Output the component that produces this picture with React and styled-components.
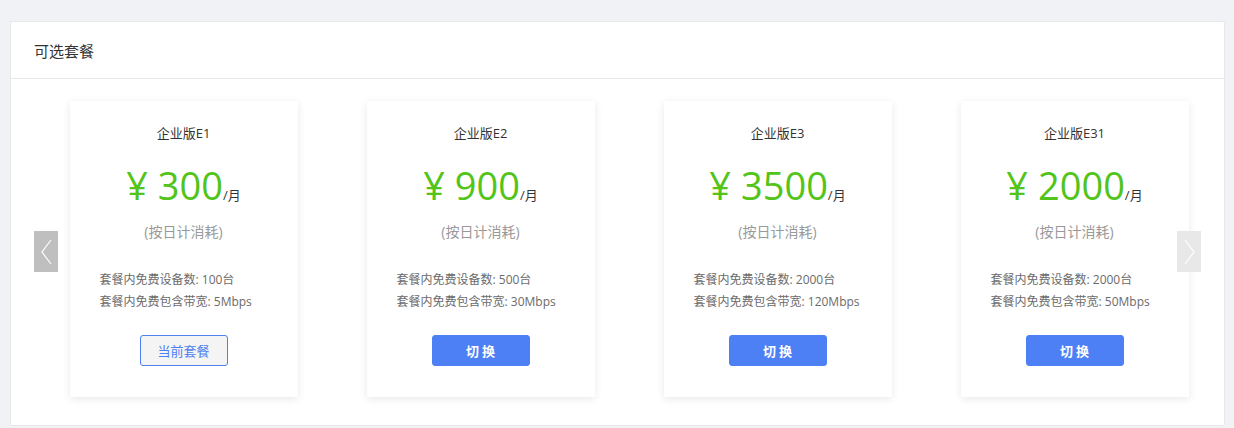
import React from 'react';
import styled, { createGlobalStyle } from 'styled-components';

const GlobalStyle = createGlobalStyle`
  html, body {
    margin: 0;
    padding: 0;
    background: #f0f2f5;
    font-family: "Open Sans", "Noto Sans CJK SC", sans-serif;
    color: #333;
  }
`;

const Page = styled.div`
  padding: 21px 9px 0 10px;
`;

const Panel = styled.section`
  background: #fff;
  border: 1px solid #e8e8e8;
  border-radius: 2px;
  height: 405px;
  box-sizing: border-box;
  width: 1215px;
`;

const PanelHeader = styled.header`
  height: 56px;
  display: flex;
  align-items: center;
  padding: 0 23px;
  border-bottom: 1px solid #e8e8e8;
  font-family: "Noto Sans CJK SC", sans-serif;
  font-size: 15px;
  font-weight: 400;
  color: #333;
`;

const Carousel = styled.div`
  position: relative;
  padding: 22px 0 0 24px;
`;

const Track = styled.div`
  display: grid;
  grid-template-columns: repeat(4, 297px);
  justify-items: center;
`;

const PlanCard = styled.div`
  width: 228px;
  height: 296px;
  box-sizing: border-box;
  background: #fff;
  box-shadow: 0 2px 8px rgba(0, 0, 0, 0.09);
  padding: 23px 0 0;
  display: flex;
  flex-direction: column;
  align-items: center;
`;

const PlanName = styled.div`
  font-size: 13px;
  line-height: 18px;
  height: 18px;
  color: #333;
`;

const Price = styled.div`
  margin-top: 21px;
  height: 44px;
  font-size: 38px;
  line-height: 44px;
  color: #52c41a;
  white-space: pre;
`;

const Unit = styled.span`
  font-size: 13px;
  line-height: 1;
  color: #333;
`;

const Billing = styled.div`
  margin-top: 15px;
  height: 20px;
  font-size: 14px;
  line-height: 20px;
  color: #999;
`;

const Details = styled.ul`
  align-self: stretch;
  list-style: none;
  margin: 27px 0 0;
  padding: 0 0 0 30px;
  font-size: 12px;
  line-height: 22px;
  color: #6b6b6b;

  li {
    height: 22px;
  }
`;

const ActionButton = styled.button`
  margin-top: 22px;
  height: 31px;
  box-sizing: border-box;
  border-radius: 3px;
  font-family: inherit;
  font-size: 13px;
  cursor: pointer;
  ${({ $current }) =>
    $current
      ? `
    width: 88px;
    background: #f4f4f5;
    border: 1px solid #4d80f0;
    color: #4d80f0;
  `
      : `
    width: 98px;
    background: #4d80f5;
    border: 1px solid #4d80f5;
    color: #fff;
    font-weight: 700;
    letter-spacing: 3px;
    text-indent: 3px;
  `}
`;

const Arrow = styled.div`
  position: absolute;
  top: 152px;
  ${({ $side }) => ($side === 'left' ? 'left: 23px;' : 'right: 23px;')}
  width: 24px;
  height: 41px;
  background: ${({ $disabled }) => ($disabled ? '#e8e8e8' : '#bfbfbf')};
  display: flex;
  align-items: center;
  justify-content: center;
`;

const plans = [
  { name: '企业版E1', price: '300', devices: '100台', bandwidth: '5Mbps', current: true },
  { name: '企业版E2', price: '900', devices: '500台', bandwidth: '30Mbps' },
  { name: '企业版E3', price: '3500', devices: '2000台', bandwidth: '120Mbps' },
  { name: '企业版E31', price: '2000', devices: '2000台', bandwidth: '50Mbps' },
];

function Chevron({ dir }) {
  const points = dir === 'left' ? '11,2 2,14 11,26' : '2,2 11,14 2,26';
  return (
    <svg width="13" height="28" viewBox="0 0 13 28">
      <polyline points={points} fill="none" stroke="#fff" strokeWidth="1.2" />
    </svg>
  );
}

export default function App() {
  return (
    <Page>
      <GlobalStyle />
      <Panel>
        <PanelHeader>可选套餐</PanelHeader>
        <Carousel>
          <Track>
            {plans.map((p) => (
              <PlanCard key={p.name}>
                <PlanName>{p.name}</PlanName>
                <Price>
                  {`¥ ${p.price}`}
                  <Unit>/月</Unit>
                </Price>
                <Billing>(按日计消耗)</Billing>
                <Details>
                  <li>套餐内免费设备数: {p.devices}</li>
                  <li>套餐内免费包含带宽: {p.bandwidth}</li>
                </Details>
                <ActionButton $current={p.current}>
                  {p.current ? '当前套餐' : '切换'}
                </ActionButton>
              </PlanCard>
            ))}
          </Track>
          <Arrow $side="left">
            <Chevron dir="left" />
          </Arrow>
          <Arrow $side="right" $disabled>
            <Chevron dir="right" />
          </Arrow>
        </Carousel>
      </Panel>
    </Page>
  );
}
